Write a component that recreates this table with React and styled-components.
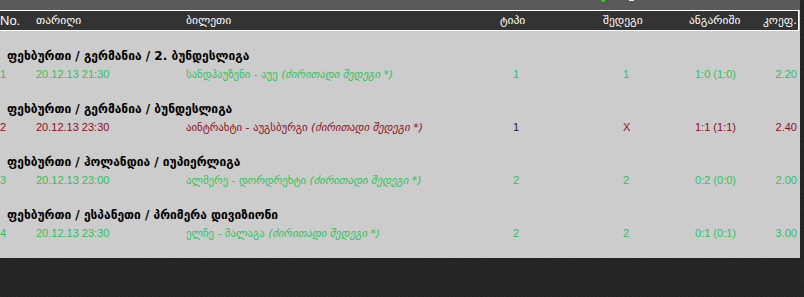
import React from 'react';
import styled, { createGlobalStyle } from 'styled-components';

const GlobalStyle = createGlobalStyle`
  html, body {
    margin: 0;
    padding: 0;
    background: #232323;
    font-family: Arial, "Liberation Sans", "DejaVu Sans", sans-serif;
  }
`;

const Page = styled.div`
  width: 804px;
  height: 297px;
  background-color: #232323;
  background-image: repeating-linear-gradient(45deg, rgba(255,255,255,0.025) 0 1px, transparent 1px 3px);
  overflow: hidden;
`;

const Board = styled.div`
  width: 800px;
  background: #cccccc;
`;

const TopStrip = styled.div`
  height: 10px;
  background: #5a5a5a;
  position: relative;
`;

const Dot = styled.span`
  position: absolute;
  left: 601px;
  top: -2px;
  width: 4px;
  height: 4px;
  border-radius: 50%;
  background: #22dd22;
`;

const Blip = styled.span`
  position: absolute;
  left: 629px;
  top: -1px;
  width: 5px;
  height: 2px;
  background: #dfe8ff;
`;

const Columns = styled.div`
  display: grid;
  grid-template-columns: 36px 150px 314px 103px 86px 74px 37px;
`;

const HeadRow = styled(Columns)`
  height: 19px;
  width: 798px;
  border: 1px solid #ffffff;
  border-left: none;
  background: #333333;
  color: #ffffff;
  font-size: 12px;
  line-height: 19px;
`;

const HeadCell = styled.div`
  white-space: nowrap;
  font-size: ${p => (p.$latin ? '13px' : '11.5px')};
  font-family: ${p => (p.$latin ? 'Arial, "Liberation Sans", sans-serif' : '"DejaVu Sans", sans-serif')};
`;

const Body = styled.div`
  padding-bottom: 15px;
`;

const GroupTitle = styled.div`
  padding: 17px 0 1px 7px;
  height: 16px;
  line-height: 16px;
  font-family: "DejaVu Sans", sans-serif;
  font-weight: bold;
  font-size: 12px;
  color: #000000;
  white-space: nowrap;
`;

const Row = styled(Columns)`
  height: 19px;
  line-height: 19px;
  font-size: 11px;
  color: ${p => (p.$lost ? '#8c0d1a' : '#2fc25b')};
`;

const Cell = styled.div`
  white-space: nowrap;
  padding-left: ${p => p.$pad || 0}px;
  text-align: ${p => (p.$right ? 'right' : 'left')};
  padding-right: ${p => (p.$right ? 3 : 0)}px;
  color: ${p => (p.$ink ? '#1a1a1a' : 'inherit')};
`;

const Event = styled(Cell)`
  font-family: "DejaVu Sans", sans-serif;
  font-size: 10.8px;
`;

const Note = styled.i`
  font-style: italic;
`;

const bets = [
  { n: 1, group: 'ფეხბურთი / გერმანია / 2. ბუნდესლიგა', date: '20.12.13 21:30', event: 'სანდჰაუზენი - აუე', type: '1', result: '1', score: '1:0 (1:0)', coef: '2.20' },
  { n: 2, group: 'ფეხბურთი / გერმანია / ბუნდესლიგა', date: '20.12.13 23:30', event: 'აინტრახტი - აუგსბურგი', type: '1', result: 'X', score: '1:1 (1:1)', coef: '2.40', lost: true },
  { n: 3, group: 'ფეხბურთი / ჰოლანდია / იუპიერლიგა', date: '20.12.13 23:00', event: 'ალმერე - დორდრეხტი', type: '2', result: '2', score: '0:2 (0:0)', coef: '2.00' },
  { n: 4, group: 'ფეხბურთი / ესპანეთი / პრიმერა დივიზიონი', date: '20.12.13 23:30', event: 'ელჩე - მალაგა', type: '2', result: '2', score: '0:1 (0:1)', coef: '3.00' },
];

export default function App() {
  return (
    <Page>
      <GlobalStyle />
      <Board>
        <TopStrip>
          <Dot />
          <Blip />
        </TopStrip>
        <HeadRow>
          <HeadCell $latin>No.</HeadCell>
          <HeadCell>თარიღი</HeadCell>
          <HeadCell>ბილეთი</HeadCell>
          <HeadCell>ტიპი</HeadCell>
          <HeadCell>შედეგი</HeadCell>
          <HeadCell>ანგარიში</HeadCell>
          <HeadCell>კოეფ.</HeadCell>
        </HeadRow>
        <Body>
          {bets.map(b => (
            <React.Fragment key={b.n}>
              <GroupTitle>{b.group}</GroupTitle>
              <Row $lost={b.lost}>
                <Cell>{b.n}</Cell>
                <Cell>{b.date}</Cell>
                <Event>
                  {b.event} <Note>(ძირითადი შედეგი *)</Note>
                </Event>
                <Cell $pad={13} $ink={b.lost}>{b.type}</Cell>
                <Cell $pad={20}>{b.result}</Cell>
                <Cell $pad={6}>{b.score}</Cell>
                <Cell $right>{b.coef}</Cell>
              </Row>
            </React.Fragment>
          ))}
        </Body>
      </Board>
    </Page>
  );
}
